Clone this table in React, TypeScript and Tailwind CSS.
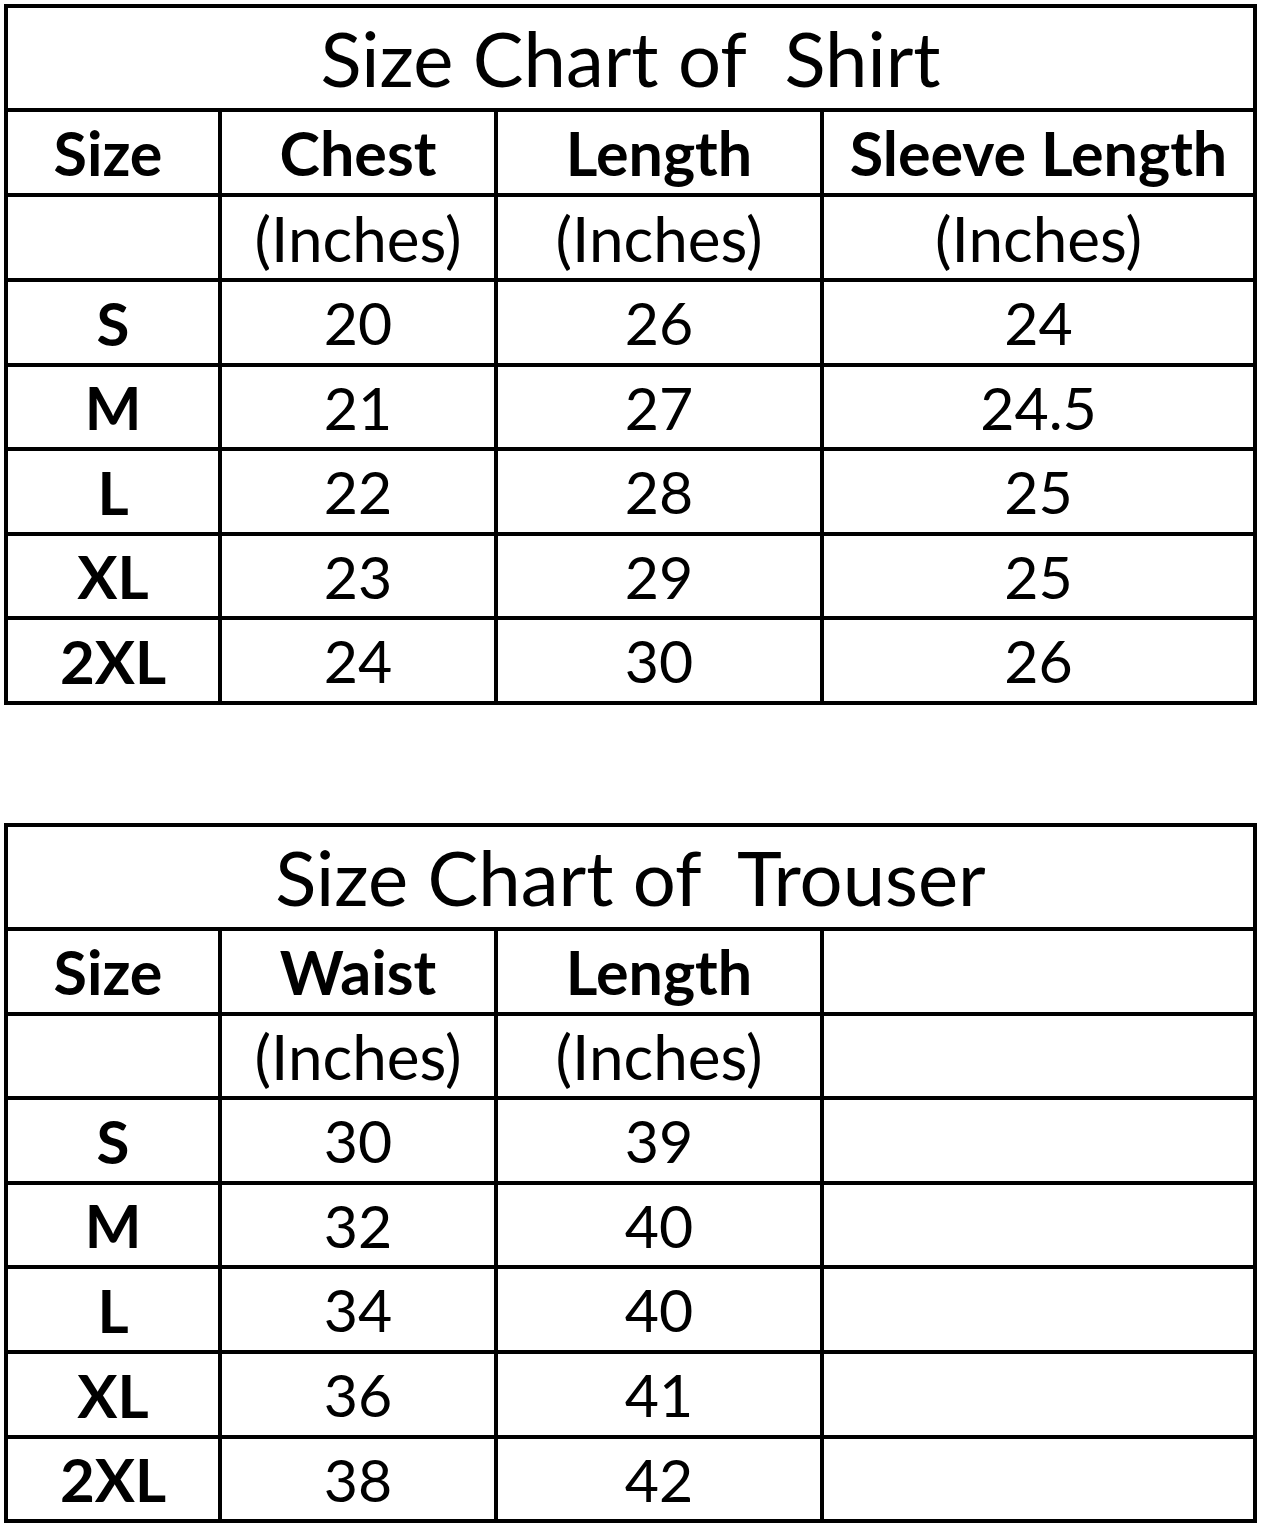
import React from "react";

// Shirt and trouser size charts
const shirtRows = [
    ["S", "20", "26", "24"],
    ["M", "21", "27", "24.5"],
    ["L", "22", "28", "25"],
    ["XL", "23", "29", "25"],
    ["2XL", "24", "30", "26"],
];

const trouserRows = [
    ["S", "30", "39", ""],
    ["M", "32", "40", ""],
    ["L", "34", "40", ""],
    ["XL", "36", "41", ""],
    ["2XL", "38", "42", ""],
];

type TableProps = {
    title: string;
    headers: string[];
    units: string[];
    rows: string[][];
    rowsClass: string;
};

const Cell = ({ children, className }: { children?: React.ReactNode; className: string }) => (
    <div className={"bg-white flex items-center justify-center leading-none text-black " + className}>
        {children}
    </div>
);

const SizeTable = ({ title, headers, units, rows, rowsClass }: TableProps) => (
    <div className={"w-[1253px] grid grid-cols-[210px_272px_322px_1fr] gap-[4px] p-[4px] bg-black " + rowsClass}>
        <div className="col-span-4 bg-white flex items-center justify-center">
            <span className="whitespace-pre text-[76px] leading-none text-black">{title}</span>
        </div>

        {headers.map((h, i) => (
            <Cell key={"h" + i} className={"font-bold text-[61px] " + (i === 0 ? "pr-[10px]" : "")}>
                {h}
            </Cell>
        ))}

        {units.map((u, i) => (
            <Cell key={"u" + i} className="text-[62px]">
                {u}
            </Cell>
        ))}

        {rows.map((row, r) =>
            row.map((value, c) => (
                <Cell key={r + "-" + c} className={c === 0 ? "font-bold text-[60px]" : "text-[59px]"}>
                    {value}
                </Cell>
            ))
        )}
    </div>
);

export default function App() {
    return (
        <div className="min-h-[1528px] w-[1262px] bg-white pt-[4px] pl-[4px] font-[Lato,sans-serif]">
            <SizeTable
                title="Size Chart of  Shirt"
                headers={["Size", "Chest", "Length", "Sleeve Length"]}
                units={["", "(Inches)", "(Inches)", "(Inches)"]}
                rows={shirtRows}
                rowsClass="grid-rows-[100px_81px_81px_81px_80px_81px_80px_81px]"
            />

            <div className="mt-[118px]">
                <SizeTable
                    title="Size Chart of  Trouser"
                    headers={["Size", "Waist", "Length", ""]}
                    units={["", "(Inches)", "(Inches)", ""]}
                    rows={trouserRows}
                    rowsClass="grid-rows-[100px_81px_80px_81px_80px_81px_81px_80px]"
                />
            </div>
        </div>
    );
}
